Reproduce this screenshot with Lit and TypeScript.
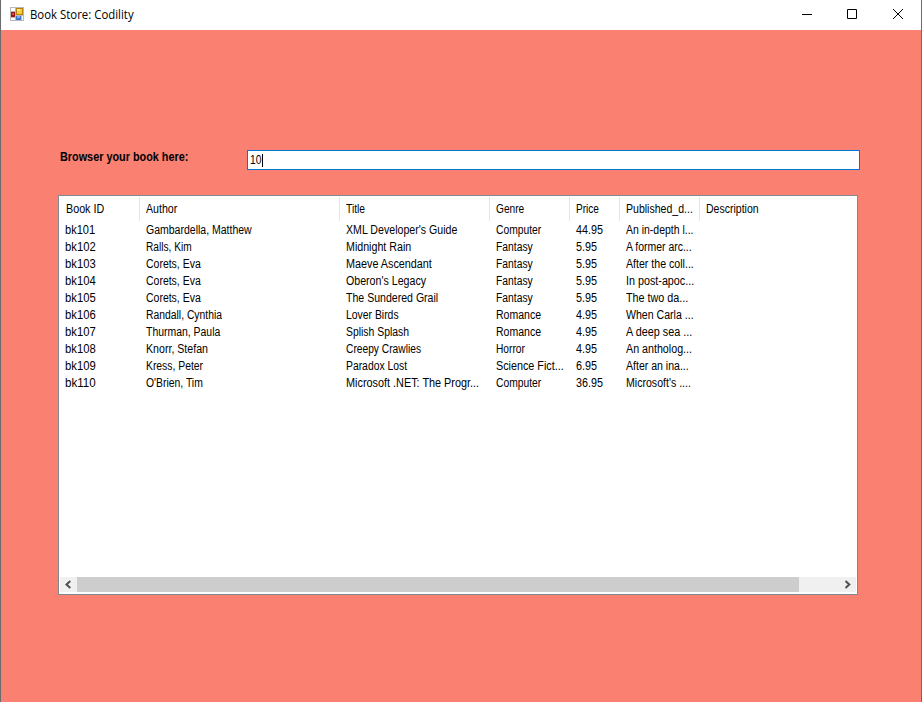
import { LitElement, html, css } from "lit";
import { customElement } from "lit/decorators.js";
import { styleMap } from "lit/directives/style-map.js";

type Cell = [text: string, width: number];

const SANS = '"Liberation Sans", sans-serif';
const columns: Cell[] = [["Book ID", 38.5], ["Author", 31.3], ["Title", 19.3], ["Genre", 28.5], ["Price", 23.2], ["Published_d...", 66.6], ["Description", 52]];

const rows: Cell[][] = [
  [["bk101", 30.4], ["Gambardella, Matthew", 106], ["XML Developer's Guide", 112], ["Computer", 45.3], ["44.95", 27.2], ["An in-depth l...", 67.2]],
  [["bk102", 31], ["Ralls, Kim", 45.6], ["Midnight Rain", 64.6], ["Fantasy", 36.7], ["5.95", 21.3], ["A former arc...", 65.9]],
  [["bk103", 31], ["Corets, Eva", 55], ["Maeve Ascendant", 87], ["Fantasy", 36.7], ["5.95", 21.3], ["After the coll...", 67.5]],
  [["bk104", 31], ["Corets, Eva", 55], ["Oberon's Legacy", 80], ["Fantasy", 36.7], ["5.95", 21.3], ["In post-apoc...", 67]],
  [["bk105", 31], ["Corets, Eva", 55], ["The Sundered Grail", 91.6], ["Fantasy", 36.7], ["5.95", 21.3], ["The two da...", 62]],
  [["bk106", 31], ["Randall, Cynthia", 76.3], ["Lover Birds", 52.6], ["Romance", 45.3], ["4.95", 21.3], ["When Carla ...", 67.3]],
  [["bk107", 31], ["Thurman, Paula", 74.6], ["Splish Splash", 62.4], ["Romance", 45.3], ["4.95", 21.3], ["A deep sea ...", 66.5]],
  [["bk108", 31], ["Knorr, Stefan", 61.4], ["Creepy Crawlies", 75], ["Horror", 28.8], ["4.95", 21.3], ["An antholog...", 65.7]],
  [["bk109", 31], ["Kress, Peter", 57], ["Paradox Lost", 61.6], ["Science Fict...", 67.4], ["6.95", 21.3], ["After an ina...", 62.4]],
  [["bk110", 31], ["O'Brien, Tim", 57], ["Microsoft .NET: The Progr...", 133], ["Computer", 45.3], ["36.95", 27.2], ["Microsoft's ....", 64.6]],
];

const pen = document.createElement("canvas").getContext("2d")!;
const fit = css`.fit { display: inline-block; transform-origin: 0 50%; white-space: pre; }`;

/** Condenses a label so that its drawn width is the one given. */
function fitted([text, width]: Cell, font = `12px ${SANS}`) {
  pen.font = font;
  const m = pen.measureText(text);
  const ink = m.actualBoundingBoxRight + m.actualBoundingBoxLeft;
  return html`<span class="fit" style=${styleMap({ transform: `scaleX(${(width / ink).toFixed(4)})` })}>${text}</span>`;
}

@customElement("book-list")
export class BookList extends LitElement {
  static styles = [fit, css`
    :host { display: flex; flex-direction: column; box-sizing: border-box; width: 800px; height: 400px; padding: 1px; border: 1px solid #828790; background: #fff; color: #000; }
    .line { display: grid; grid-template-columns: 80px 200px 150px 80px 50px 80px 1fr; height: 17px; }
    .line.head { height: 24px; margin-bottom: 1px; }
    .cell { box-sizing: border-box; padding-left: 5.6px; line-height: 17px; white-space: pre; }
    .body .cell:first-child { padding-left: 5px; }
    .head .cell { line-height: 24px; border-right: 1px solid #e5e5e5; }
    .head .cell:last-child { border: 0; }
    .body { flex: 1; }
    .bar { display: flex; height: 15px; margin-bottom: 1px; background: #f0f0f0; }
    .arrow { width: 17px; height: 15px; display: block; flex: none; }
    .track { flex: 1; }
    .thumb { width: 722px; height: 15px; background: #cdcdcd; }
  `];
  render() {
    return html`
      <div class="line head">${columns.map((c) => html`<div class="cell">${fitted(c)}</div>`)}</div>
      <div class="body">
        ${rows.map((r) => html`<div class="line">${r.map((c) => html`<div class="cell">${fitted(c)}</div>`)}</div>`)}
      </div>
      <div class="bar">
        <svg class="arrow" viewBox="0 0 17 15"><path d="M10.3 4L6.5 7.5 10.3 11" fill="none" stroke="#505050" stroke-width="2"/></svg>
        <div class="track"><div class="thumb"></div></div>
        <svg class="arrow" viewBox="0 0 17 15"><path d="M6.5 4L10.3 7.5 6.5 11" fill="none" stroke="#505050" stroke-width="2"/></svg>
      </div>`;
  }
}

@customElement("app-root")
export class AppRoot extends LitElement {
  static styles = [fit, css`
    :host { display: block; box-sizing: border-box; width: 922px; height: 702px; background: #fa8072; border-left: 1px solid #6b6b6b; border-right: 1px solid #6b6b6b; font: 12px "Liberation Sans", sans-serif; color: #000; overflow: hidden; }
    .title { display: flex; align-items: center; height: 30px; background: #fff; font-family: "Open Sans", sans-serif; }
    .logo { width: 14px; height: 14px; margin: 0 6px 2px 9px; }
    .name { flex: 1; line-height: 30px; white-space: pre; }
    .ctl { width: 46px; height: 30px; display: block; }
    .search { display: flex; height: 20px; padding: 120px 0 25px 59px; }
    .label { width: 187px; line-height: 15px; white-space: pre; font-weight: bold; }
    .input { display: flex; align-items: center; box-sizing: border-box; width: 613px; height: 20px; border: 1px solid #0078d7; background: #fff; padding-left: 2px; }
    .value { width: 12px; }
    .caret { width: 1px; height: 13px; background: #000; }
    book-list { margin-left: 57px; }
  `];
  render() {
    return html`
      <div class="title">
        <svg class="logo" viewBox="0 0 14 14" shape-rendering="crispEdges">
          <path fill="#b9b9b9" d="M0 0h14v14H0z"/>
          <path fill="#fff" d="M1 1h4v3H1zM1 11h4v2H1zM12 9h1v4h-1z"/>
          <path fill="#9c1818" d="M1 5h4v5H1z"/><path fill="#d84a38" d="M2 6h2v2H2z"/>
          <path fill="#b98208" d="M6 1h7v7H6z"/><path fill="#f9cb45" d="M7 2h5v5H7z"/><path fill="#ffe79a" d="M7 2h3v2H7z"/>
          <path fill="#3f74cc" d="M6 9h5v4H6z"/><path fill="#82adf0" d="M7 9h3v2H7z"/>
        </svg>
        <div class="name">${fitted(["Book Store: Codility", 103.6], '12px "Open Sans", sans-serif')}</div>
        <svg class="ctl" viewBox="0 0 46 30"><path d="M19 14.5h10" stroke="#000"/></svg>
        <svg class="ctl" viewBox="0 0 46 30"><path d="M18.5 9.5h9v9h-9z" fill="none" stroke="#000"/></svg>
        <svg class="ctl" viewBox="0 0 46 30"><path d="M18 9l10 10M28 9L18 19" stroke="#000"/></svg>
      </div>
      <div class="search">
        <div class="label">${fitted(["Browser your book here:", 127.4], `bold 12px ${SANS}`)}</div>
        <div class="input"><div class="value">${fitted(["10", 11.7])}</div><div class="caret"></div></div>
      </div>
      <book-list></book-list>`;
  }
}
